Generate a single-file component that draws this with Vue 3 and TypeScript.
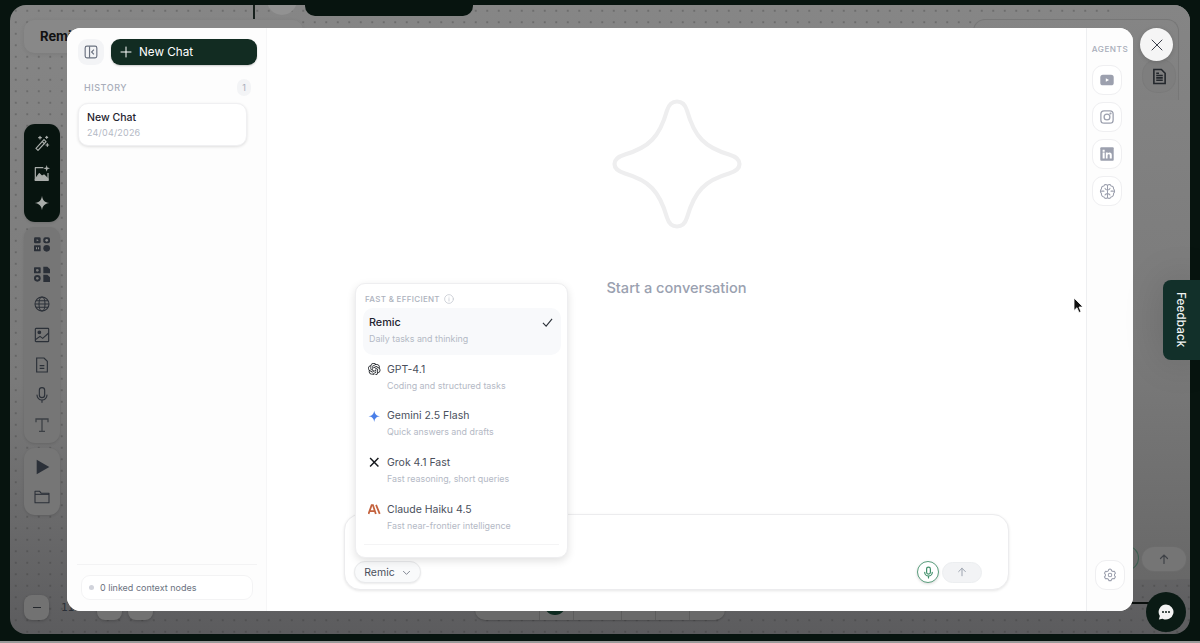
<script setup lang="ts">
interface Model {
  name: string
  desc: string
  icon?: 'gpt' | 'gemini' | 'grok' | 'claude'
  active?: boolean
}

const models: Model[] = [
  { name: 'Remic', desc: 'Daily tasks and thinking', active: true },
  { name: 'GPT-4.1', desc: 'Coding and structured tasks', icon: 'gpt' },
  { name: 'Gemini 2.5 Flash', desc: 'Quick answers and drafts', icon: 'gemini' },
  { name: 'Grok 4.1 Fast', desc: 'Fast reasoning, short queries', icon: 'grok' },
  { name: 'Claude Haiku 4.5', desc: 'Fast near-frontier intelligence', icon: 'claude' },
]

const openaiPath =
  'M22.2819 9.8211a5.9847 5.9847 0 0 0-.5157-4.9108 6.0462 6.0462 0 0 0-6.5098-2.9A6.0651 6.0651 0 0 0 4.9807 4.1818a5.9847 5.9847 0 0 0-3.9977 2.9 6.0462 6.0462 0 0 0 .7427 7.0966 5.98 5.98 0 0 0 .511 4.9107 6.051 6.051 0 0 0 6.5146 2.9001A5.9847 5.9847 0 0 0 13.2599 24a6.0557 6.0557 0 0 0 5.7718-4.2058 5.9894 5.9894 0 0 0 3.9977-2.9001 6.0557 6.0557 0 0 0-.7475-7.0729zm-9.022 12.6081a4.4755 4.4755 0 0 1-2.8764-1.0408l.1419-.0804 4.7783-2.7582a.7948.7948 0 0 0 .3927-.6813v-6.7369l2.02 1.1686a.071.071 0 0 1 .038.052v5.5826a4.504 4.504 0 0 1-4.4945 4.4944zm-9.6607-4.1254a4.4708 4.4708 0 0 1-.5346-3.0137l.142.0852 4.783 2.7582a.7712.7712 0 0 0 .7806 0l5.8428-3.3685v2.3324a.0804.0804 0 0 1-.0332.0615L9.74 19.9502a4.4992 4.4992 0 0 1-6.1408-1.6464zM2.3408 7.8956a4.485 4.485 0 0 1 2.3655-1.9728V11.6a.7664.7664 0 0 0 .3879.6765l5.8144 3.3543-2.0201 1.1685a.0757.0757 0 0 1-.071 0l-4.8303-2.7865A4.504 4.504 0 0 1 2.3408 7.872zm16.5963 3.8558L13.1038 8.364 15.1192 7.2a.0757.0757 0 0 1 .071 0l4.8303 2.7913a4.4944 4.4944 0 0 1-.6765 8.1042v-5.6772a.79.79 0 0 0-.407-.667zm2.0107-3.0231l-.142-.0852-4.7735-2.7818a.7759.7759 0 0 0-.7854 0L9.409 9.2297V6.8974a.0662.0662 0 0 1 .0284-.0615l4.8303-2.7866a4.4992 4.4992 0 0 1 6.6802 4.66zM8.3065 12.863l-2.02-1.1638a.0804.0804 0 0 1-.038-.0567V6.0742a4.4992 4.4992 0 0 1 7.3757-3.4537l-.142.0805L8.704 5.459a.7948.7948 0 0 0-.3927.6813zm1.0976-2.3654l2.602-1.4998 2.6069 1.4998v2.9994l-2.5974 1.4997-2.6067-1.4997Z'
</script>

<template>
  <div class="page">
    <!-- dimmed canvas behind the modal -->
    <div class="canvas">
      <div class="brand">Remic</div>
      <div class="top-line"></div>
      <div class="top-circle"></div>
      <div class="top-pill"></div>
      <div class="right-block"></div>
      <div class="top-right-panel"></div>
      <div class="doc-btn">
        <svg width="15" height="17" viewBox="0 0 16 18" fill="none" stroke="#23272c" stroke-width="1.7">
          <path d="M2 1.5h8l4 4v11H2z" />
          <path d="M4.5 8h7M4.5 10.500h7M4.5 13h7M4.5 5.500h3" />
        </svg>
      </div>

      <div class="rail">
        <div class="rail-group dark">
          <svg class="ri" viewBox="0 0 24 24" fill="none" stroke="#a9adaa" stroke-width="1.800" stroke-linecap="round">
            <path d="M3 20 15 7l3 3L6 23z" />
            <path d="M12.500 10l3 3M9 2v4M7 4h4M20 13v4M18 15h4M19 2v3M17.500 3.500h3" />
          </svg>
          <svg class="ri" viewBox="0 0 24 24" fill="none" stroke="#a9adaa" stroke-width="1.800" stroke-linejoin="round">
            <path d="M14 4H2v19h19V12" />
            <path d="M2 21l6-8 4 4 3-2 6 6v2H2z" fill="#a9adaa" />
            <path d="M19 0l1.200 3.800L24 5l-3.800 1.200L19 10l-1.200-3.800L14 5l3.800-1.200z" fill="#a9adaa" stroke="none" />
          </svg>
          <svg class="ri" viewBox="0 0 24 24" fill="#a9adaa">
            <path d="M12 1c1 7 4 10 11 11-7 1-10 4-11 11-1-7-4-10-11-11 7-1 10-4 11-11z" />
          </svg>
        </div>
        <div class="rail-group">
          <svg class="ri" viewBox="0 0 24 24" fill="#2b3038">
            <rect x="0" y="2" width="10" height="9" rx="2" />
            <rect x="14" y="2" width="10" height="9" rx="3" />
            <rect x="0" y="14" width="10" height="9" rx="1" />
            <circle cx="19" cy="18.500" r="5" />
            <path d="M4 5l3 1.500L4 8z" fill="#888" />
            <circle cx="19" cy="6.500" r="2" fill="#888" />
            <path d="M3 17v3h1.500v-3zM6 17v3h1.500v-3z" fill="#888" />
          </svg>
          <svg class="ri" viewBox="0 0 24 24" fill="#2b3038">
            <rect x="0" y="2" width="10" height="9" rx="1" />
            <path d="M14 1h6l4 4v6H14z" />
            <circle cx="5" cy="18.500" r="5" />
            <path d="M14 13h6l4 4v7H14z" />
            <circle cx="5" cy="6.500" r="2" fill="#777" />
            <circle cx="5" cy="18.500" r="2" fill="#777" />
          </svg>
          <svg class="ri" viewBox="0 0 24 24" fill="none" stroke="#2b3038" stroke-width="1.600">
            <circle cx="12" cy="12" r="10.500" />
            <ellipse cx="12" cy="12" rx="4.500" ry="10.500" />
            <path d="M1.500 12h21M3 7h18M3 17h18" />
          </svg>
          <svg class="ri" viewBox="0 0 24 24" fill="none" stroke="#2b3038" stroke-width="1.700">
            <rect x="2" y="2" width="20" height="20" rx="1" />
            <circle cx="8" cy="8" r="2" fill="#2b3038" />
            <path d="M2 19l7-5 4 3 9-8" />
          </svg>
          <svg class="ri" viewBox="0 0 24 24" fill="none" stroke="#2b3038" stroke-width="1.700">
            <path d="M4 1.500h11l5 5V22.500H4z" />
            <path d="M8.500 13h7M8.500 17h7" />
          </svg>
          <svg class="ri" viewBox="0 0 24 24" fill="none" stroke="#2b3038" stroke-width="1.700" stroke-linecap="round">
            <rect x="8" y="1" width="8" height="15" rx="4" />
            <path d="M4.500 12a7.500 7.500 0 0 0 15 0M12 19.500V23" />
          </svg>
          <svg class="ri" viewBox="0 0 24 24" fill="none" stroke="#3c4045" stroke-width="1.900">
            <path d="M3 8V3h18v5M12 3v18M7.500 21.500h9" />
          </svg>
        </div>
        <div class="rail-group short">
          <svg class="ri" viewBox="0 0 24 24" fill="#2b3038"><path d="M4 1l19 11L4 23z" /></svg>
          <svg class="ri" viewBox="0 0 24 24" fill="none" stroke="#2b3038" stroke-width="1.600" stroke-linejoin="round">
            <path d="M1.500 3.500h7l2.500 3h11.500v14h-21z" />
            <path d="M1.500 8h21" />
          </svg>
        </div>
      </div>

      <div class="zoom-btn minus"><span></span></div>
      <div class="zoom-label">11</div>
      <div class="zoom-btn b2"></div>
      <div class="zoom-btn b3"></div>

      <div class="bottom-bar">
        <i style="left: 64px"></i>
        <i style="left: 98px"></i>
        <i style="left: 146px"></i>
        <i style="left: 180px"></i>
        <i style="left: 214px"></i>
        <b></b>
      </div>

      <div class="right-back">
        <div class="back-arc"></div>
        <div class="back-send">
          <svg width="12" height="12" viewBox="0 0 24 24" fill="none" stroke="#3f4247" stroke-width="2.400" stroke-linecap="round">
            <path d="M12 21V4M5 11l7-7 7 7" />
          </svg>
        </div>
      </div>
      <div class="dark-line"></div>
    </div>

    <!-- modal -->
    <div class="modal">
      <aside class="sidebar">
        <div class="side-top">
          <button class="toggle">
            <svg width="14" height="14" viewBox="0 0 24 24" fill="none" stroke="#6b7280" stroke-width="2">
              <rect x="2" y="2" width="20" height="20" rx="3" />
              <path d="M9.500 2v20M17 8l-4 4 4 4" />
            </svg>
          </button>
          <button class="new-chat">
            <svg width="12" height="12" viewBox="0 0 24 24" fill="none" stroke="#fff" stroke-width="2" stroke-linecap="round">
              <path d="M12 2v20M2 12h20" />
            </svg>
            New Chat
          </button>
        </div>
        <div class="history-head">
          <span>HISTORY</span>
          <em>1</em>
        </div>
        <div class="chat-card">
          <div class="chat-title">New Chat</div>
          <div class="chat-date">24/04/2026</div>
        </div>
        <div class="side-foot">
          <div class="linked"><span class="dot"></span>0 linked context nodes</div>
        </div>
      </aside>

      <main class="main">
        <div class="hero">
          <svg width="130" height="130" viewBox="0 0 130 130" fill="none" stroke="#eeeeef" stroke-width="4.200">
            <path d="M65 2.500c6 0 8.500 4 10 9 7.500 26.500 18 37 42 44 6 1.800 10.500 4.500 10.500 9.500s-4.500 7.700-10.500 9.500c-24 7-34.500 17.500-42 44-1.500 5-4 9-10 9s-8.500-4-10-9c-7.500-26.500-18-37-42-44C7 72.700 2.500 70 2.500 65s4.500-7.700 10.500-9.500c24-7 34.500-17.500 42-44 1.500-5 4-9 10-9z" />
          </svg>
          <p>Start a conversation</p>
        </div>

        <div class="composer">
          <div class="chip-wrap">
            <div class="menu">
              <div class="menu-head">
                FAST &amp; EFFICIENT
                <svg width="10" height="10" viewBox="0 0 24 24" fill="none" stroke="#c3c7cf" stroke-width="1.800" stroke-linecap="round">
                  <circle cx="12" cy="12" r="10.500" />
                  <path d="M12 11v6M12 7.500v.1" />
                </svg>
              </div>
              <div v-for="m in models" :key="m.name" class="model" :class="{ active: m.active }">
                <div class="model-name">
                  <svg v-if="m.icon === 'gpt'" class="logo" viewBox="0 0 24 24" fill="#1f2328"><path :d="openaiPath" /></svg>
                  <svg v-else-if="m.icon === 'gemini'" class="logo" viewBox="0 0 24 24" fill="#4a7fe8">
                    <path d="M12 1c1 7 4 10 11 11-7 1-10 4-11 11-1-7-4-10-11-11 7-1 10-4 11-11z" />
                  </svg>
                  <svg v-else-if="m.icon === 'grok'" class="logo" viewBox="0 0 24 24" fill="none" stroke="#15181c" stroke-width="2.800">
                    <path d="M4 4l16 16M20 4L4 20" />
                  </svg>
                  <svg v-else-if="m.icon === 'claude'" class="logo" viewBox="0 0 24 24" fill="none" stroke="#c4623d" stroke-width="3.400">
                    <path d="M1 21 7 4h2.500L15 21M4 15.500h8M15.500 3.500 22.500 21" />
                  </svg>
                  <span>{{ m.name }}</span>
                  <svg v-if="m.active" class="check" width="11" height="11" viewBox="0 0 24 24" fill="none" stroke="#2b3038" stroke-width="2.400">
                    <path d="M2 13l7 7L22 4" />
                  </svg>
                </div>
                <div class="model-desc">{{ m.desc }}</div>
              </div>
              <div class="menu-rule"></div>
            </div>
          </div>
          <div class="composer-row">
            <button class="chip">
              Remic
              <svg width="9" height="9" viewBox="0 0 24 24" fill="none" stroke="#6b7280" stroke-width="2.200">
                <path d="M3 8l9 9 9-9" />
              </svg>
            </button>
            <div class="composer-actions">
              <button class="mic">
                <svg width="13" height="13" viewBox="0 0 24 24" fill="none" stroke="#3f8f69" stroke-width="2.200" stroke-linecap="round">
                  <rect x="8.500" y="2" width="7" height="13" rx="3.500" />
                  <path d="M5 11.500a7 7 0 0 0 14 0M12 18.500V22" />
                </svg>
              </button>
              <button class="send">
                <svg width="10" height="10" viewBox="0 0 24 24" fill="none" stroke="#9ca3af" stroke-width="2.400" stroke-linecap="round">
                  <path d="M12 21V3M4 11l8-8 8 8" />
                </svg>
              </button>
            </div>
          </div>
        </div>
      </main>

      <aside class="agents">
        <div class="agents-label">AGENTS</div>
        <button class="agent">
          <svg viewBox="0 0 24 24"><rect x="0.500" y="3" width="23" height="18" rx="4.500" fill="#9ca0ae" /><path d="M10 9l5.500 3-5.500 3z" fill="#fff" /></svg>
        </button>
        <button class="agent">
          <svg viewBox="0 0 24 24" fill="none" stroke="#9ca0ae" stroke-width="2.200"><rect x="1.500" y="1.500" width="21" height="21" rx="5.500" /><circle cx="12" cy="12" r="5" /><circle cx="18" cy="6" r=".8" fill="#9ca0ae" /></svg>
        </button>
        <button class="agent">
          <svg viewBox="0 0 24 24"><rect x="0.500" y="0.500" width="23" height="23" rx="1.500" fill="#9ca0ae" /><path d="M4.500 9.500h3.500v10H4.500zM4.500 4.500h3.500v3.500H4.500zM10 9.500h3.300v1.400c.7-1 1.700-1.600 3.100-1.600 2.600 0 3.800 1.500 3.800 4.400v5.800h-3.500v-5.200c0-1.300-.5-2-1.600-2-1.200 0-2.100.8-2.100 2.100v5.100H10z" fill="#fff" /></svg>
        </button>
        <button class="agent brain">
          <svg viewBox="0 0 24 24" fill="none" stroke="#9ca0ae" stroke-width="1.500" stroke-linecap="round" stroke-linejoin="round">
            <path d="M12 3.500C10 1.500 7.500 2 7 4.200 4.500 4.200 3 6.200 3.500 8.300 1.500 9.800 1.500 13.200 3.500 14.700 3 17.200 4.500 19.500 7 19.700 7.500 21.700 10 22.500 12 20.700" />
            <path d="M12 3.500C14 1.500 16.500 2 17 4.200 19.500 4.200 21 6.200 20.500 8.300 22.500 9.800 22.500 13.200 20.500 14.700 21 17.200 19.500 19.500 17 19.700 16.500 21.700 14 22.500 12 20.700" />
            <path d="M12 3.500v17.200M12 10c-1.500 0-3-.8-3.500-2.500M12 10c1.500 0 3-.8 3.500-2.500M12 15c-1.500 0-3 .8-3.500 2M12 15c1.500 0 3 .8 3.500 2M3.500 11.500H7M20.500 11.500H17" />
          </svg>
        </button>
        <button class="agent settings">
          <svg viewBox="0 0 24 24" fill="none" stroke="#9ca0ae" stroke-width="1.800" stroke-linejoin="round">
            <path d="M12 1.800l2 .6.700 2.400 2.300 1.300 2.400-.6 2 3.400-1.700 1.800v2.600l1.700 1.800-2 3.400-2.400-.6-2.300 1.300-.7 2.400h-4l-.7-2.400L6.800 18l-2.400.6-2-3.400 1.700-1.800v-2.600L2.400 9l2-3.400 2.400.6 2.300-1.300.7-2.400z" />
            <circle cx="12" cy="12" r="3" />
          </svg>
        </button>
      </aside>
    </div>

    <button class="close">
      <svg width="12" height="12" viewBox="0 0 24 24" fill="none" stroke="#3a3f4a" stroke-width="2" stroke-linecap="round">
        <path d="M2 2l20 20M22 2L2 22" />
      </svg>
    </button>

    <div class="feedback"><span>Feedback</span></div>

    <button class="chat-fab">
      <svg width="18" height="18" viewBox="0 0 24 24">
        <path d="M12 2a10 10 0 1 1-4.600 18.900L2.500 22l1.300-4.600A10 10 0 0 1 12 2z" fill="#f3f3f3" />
        <circle cx="8" cy="12" r="1.300" fill="#0a1a14" />
        <circle cx="12" cy="12" r="1.300" fill="#0a1a14" />
        <circle cx="16" cy="12" r="1.300" fill="#0a1a14" />
      </svg>
    </button>

    <svg class="cursor" width="11" height="17" viewBox="0 0 11 17">
      <path d="M1 1v12.500l3-2.800 2 4.800 2-.8-2-4.700h4z" fill="#111" stroke="#fff" stroke-width=".8" />
    </svg>
  </div>
</template>

<style>
html,
body {
  margin: 0;
  overflow: hidden;
}
</style>

<style scoped>
.page {
  position: relative;
  width: 1200px;
  height: 643px;
  overflow: hidden;
  background: linear-gradient(#07140f 0 641px, #9a9a9a 641px);
  font-family: Inter, 'Liberation Sans', sans-serif;
}

button {
  font-family: inherit;
  padding: 0;
  border: none;
  cursor: pointer;
}

/* canvas behind */
.canvas {
  position: absolute;
  left: 10px;
  top: 5px;
  width: 1180px;
  height: 629px;
  border-radius: 16px;
  overflow: hidden;
  background-color: #7c7c7c;
  background-image:
    radial-gradient(circle, rgba(50, 50, 50, 0.4) 0.6px, transparent 0.9px),
    linear-gradient(#868686, #7a7a7a 60%, #5c5c5e);
  background-size: 11.500px 11.500px, 100% 100%;
}

.brand {
  position: absolute;
  left: 14px;
  top: 15px;
  width: 279px;
  height: 33px;
  padding-left: 16px;
  box-sizing: border-box;
  line-height: 33px;
  border-radius: 10px;
  background: #888;
  box-shadow: 0 1px 4px rgba(0, 0, 0, 0.08);
  color: #111;
  font-size: 13px;
  font-weight: 700;
}

.top-line {
  position: absolute;
  left: 243px;
  top: 0;
  width: 2px;
  height: 14px;
  background: #16201c;
}

.top-circle {
  position: absolute;
  left: 257px;
  top: -20px;
  width: 30px;
  height: 30px;
  border-radius: 50%;
  background: #929292;
}

.top-pill {
  position: absolute;
  left: 295px;
  top: -20px;
  width: 168px;
  height: 31px;
  border-radius: 10px;
  background: #07140f;
}

/* plain area right of the modal, the dot grid does not show here */
.right-block {
  position: absolute;
  left: 1100px;
  top: 0;
  width: 80px;
  height: 574px;
  background: linear-gradient(#858585, #7a7a7a 60%, #686868);
}

.top-right-panel {
  position: absolute;
  left: 963px;
  top: 14px;
  width: 204px;
  height: 80px;
  border: 1px solid #777;
  border-bottom: none;
  border-radius: 12px 12px 0 0;
  background: linear-gradient(#858585, #808080);
}

.doc-btn {
  position: absolute;
  left: 1133px;
  top: 55px;
  width: 32px;
  height: 32px;
  display: flex;
  align-items: center;
  justify-content: center;
  border-radius: 14px;
  background: #7e7e7e;
  box-shadow: 0 0 0 1px rgba(0, 0, 0, 0.05);
}

.rail {
  position: absolute;
  left: 14px;
  top: 119px;
  width: 36px;
  display: flex;
  flex-direction: column;
  gap: 5px;
}

.rail-group {
  display: flex;
  flex-direction: column;
  align-items: center;
  gap: 14.200px;
  padding: 9px 0 9.800px;
  border-radius: 11px;
  background: #767676;
  box-shadow: 0 1px 3px rgba(0, 0, 0, 0.12);
}

.rail-group.dark {
  background: #07140f;
  padding: 11px 0;
  gap: 14px;
}

.rail-group.short {
  padding: 11px 0 10px;
  gap: 14px;
}

.ri {
  width: 16px;
  height: 16px;
  flex: none;
}

.zoom-btn {
  position: absolute;
  top: 590px;
  width: 25px;
  height: 25px;
  border-radius: 8px;
  background: #727272;
  box-shadow: 0 1px 3px rgba(0, 0, 0, 0.2);
}

.minus {
  left: 14px;
  display: flex;
  align-items: center;
  justify-content: center;
}

.minus span {
  width: 8px;
  height: 1.500px;
  background: #23272c;
}

.b2 {
  left: 87px;
}

.b3 {
  left: 118px;
}

.zoom-label {
  position: absolute;
  left: 51px;
  top: 596px;
  font-family: 'DejaVu Sans Mono', monospace;
  font-size: 11px;
  color: #2b3038;
}

.bottom-bar {
  position: absolute;
  left: 465px;
  top: 590px;
  width: 250px;
  height: 25px;
  border-radius: 10px;
  background: #6a6a6a;
  box-shadow: 0 1px 2px rgba(0, 0, 0, 0.2);
}

.bottom-bar i {
  position: absolute;
  top: 0;
  width: 1px;
  height: 25px;
  background: #5c5c5c;
}

.bottom-bar b {
  position: absolute;
  left: 69px;
  top: 8px;
  width: 22px;
  height: 12px;
  border-radius: 0 0 11px 11px;
  background: #0e2a20;
}

.right-back {
  position: absolute;
  left: 1100px;
  top: 488px;
  width: 67px;
  height: 86px;
  border-bottom: 1px solid #666;
}

.back-arc {
  position: absolute;
  left: 7px;
  top: 53px;
  width: 20px;
  height: 22px;
  border: 1px solid #3d5e50;
  border-radius: 50%;
}

.back-send {
  position: absolute;
  left: 32px;
  top: 54px;
  width: 44px;
  height: 24px;
  display: flex;
  align-items: center;
  justify-content: center;
  border-radius: 12px;
  background: #757575;
  box-shadow: 0 0 0 1px #6c6c6c;
}

.dark-line {
  position: absolute;
  left: 1120px;
  top: 597px;
  width: 30px;
  height: 2px;
  background: #0a0f0d;
}

/* modal */
.modal {
  position: absolute;
  left: 67px;
  top: 28px;
  width: 1066px;
  height: 583px;
  display: flex;
  overflow: hidden;
  border-radius: 14px;
  background: #fff;
}

.sidebar {
  width: 200px;
  flex: none;
  display: flex;
  flex-direction: column;
  box-sizing: border-box;
  padding: 11px 9px 0 11px;
  background: #fdfdfd;
  border-right: 1px solid #f6f6f7;
}

.side-top {
  display: flex;
  gap: 7px;
}

.toggle {
  width: 26px;
  height: 26px;
  flex: none;
  display: flex;
  align-items: center;
  justify-content: center;
  border-radius: 9px;
  background: #f3f4f6;
}

.new-chat {
  flex: 1;
  height: 26px;
  display: flex;
  align-items: center;
  gap: 7px;
  padding-left: 9px;
  border-radius: 9px;
  background: #122c22;
  color: #fff;
  font-size: 11.700px;
  font-weight: 400;
  box-shadow: 0 1px 2px rgba(0, 0, 0, 0.2);
}

.history-head {
  display: flex;
  align-items: center;
  justify-content: space-between;
  margin: 14px 6px 7px 6px;
  height: 17px;
}

.history-head span {
  font-size: 9px;
  font-weight: 500;
  letter-spacing: 0.55px;
  color: #a8adba;
}

.history-head em {
  width: 14px;
  height: 17px;
  line-height: 17px;
  border-radius: 7px;
  background: #f3f4f6;
  text-align: center;
  font-size: 9px;
  font-style: normal;
  color: #a8adba;
}

.chat-card {
  width: 169px;
  height: 43px;
  box-sizing: border-box;
  padding: 7px 8px;
  border-radius: 10px;
  background: #fff;
  border: 1px solid #f0f0f2;
  box-shadow: 0 1px 3px rgba(0, 0, 0, 0.12);
}

.chat-title {
  font-size: 10.500px;
  font-weight: 500;
  line-height: 14px;
  color: #1f2430;
}

.chat-date {
  margin-top: 1px;
  font-size: 9px;
  line-height: 13px;
  letter-spacing: 0.2px;
  color: #b4b9c5;
}

.side-foot {
  margin-top: auto;
  border-top: 1px solid #f3f3f4;
  padding: 10px 4px 11px 4px;
  margin-left: -1px;
}

.linked {
  height: 25px;
  display: flex;
  align-items: center;
  box-sizing: border-box;
  padding-left: 7px;
  gap: 6px;
  border: 1px solid #f3f3f4;
  border-radius: 9px;
  background: #fff;
  font-size: 9px;
  color: #6b7280;
}

.dot {
  width: 5px;
  height: 5px;
  border-radius: 50%;
  background: #d1d3db;
}

.main {
  flex: 1;
  display: flex;
  flex-direction: column;
  align-items: center;
  padding-bottom: 21px;
}

.hero {
  flex: 1;
  display: flex;
  flex-direction: column;
  align-items: center;
  padding-top: 71px;
}

.hero p {
  margin: 50px 0 0;
  font-size: 14.600px;
  font-weight: 500;
  line-height: 19px;
  color: #9aa1b0;
}

.composer {
  width: 665px;
  height: 76px;
  box-sizing: border-box;
  position: relative;
  padding: 46px 26px 0 9px;
  border: 1px solid #ececee;
  border-radius: 16px;
  background: #fff;
  box-shadow: 0 1px 3px rgba(0, 0, 0, 0.1);
}

.chip-wrap {
  position: absolute;
  left: 10px;
  bottom: 31px;
}

.menu {
  width: 213px;
  height: 275px;
  box-sizing: border-box;
  padding: 8px 6px 0 7px;
  border: 1px solid #eeeef0;
  border-radius: 10px;
  background: #fff;
  box-shadow: 0 3px 8px rgba(0, 0, 0, 0.12);
}

.menu-head {
  display: flex;
  align-items: center;
  gap: 4px;
  height: 14px;
  margin: 0 0 2px 2px;
  font-size: 8px;
  font-weight: 500;
  letter-spacing: 0.3px;
  color: #adb2bd;
}

.model {
  height: 46.700px;
  box-sizing: border-box;
  padding: 7px 7px 0 5px;
  border-radius: 10px;
}

.model.active {
  background: #f8f9fb;
  padding-left: 6px;
  padding-right: 8px;
}

.model-name {
  display: flex;
  align-items: center;
  height: 15px;
  font-size: 10.500px;
  color: #4a4f5c;
}

.active .model-name {
  font-size: 10.800px;
  font-weight: 500;
  color: #1f2430;
}

.logo {
  width: 12.500px;
  height: 12.500px;
  flex: none;
  margin-right: 6.500px;
}

.check {
  margin-left: auto;
}

.model-desc {
  margin-top: 2px;
  padding-left: 19px;
  font-size: 8.900px;
  line-height: 14px;
  color: #b4b9c5;
}

.active .model-desc {
  padding-left: 0;
}

.menu-rule {
  height: 1px;
  margin: 3px 2px 0 1px;
  background: #f4f4f5;
}

.composer-row {
  display: flex;
  align-items: center;
  justify-content: space-between;
}

.chip {
  width: 67px;
  height: 22px;
  display: flex;
  align-items: center;
  justify-content: center;
  gap: 7px;
  border: 1px solid #e9eaec;
  border-radius: 11px;
  background: #f9fafb;
  box-shadow: 0 1px 2px rgba(0, 0, 0, 0.08);
  font-size: 10.500px;
  color: #4a4f5c;
}

.composer-actions {
  display: flex;
  align-items: center;
  gap: 3px;
}

.mic {
  width: 22px;
  height: 22px;
  display: flex;
  align-items: center;
  justify-content: center;
  border: 1px solid #5a9e7d;
  border-radius: 50%;
  background: #fff;
  box-shadow: 0 1px 3px rgba(0, 0, 0, 0.15);
}

.send {
  width: 40px;
  height: 21px;
  display: flex;
  align-items: center;
  justify-content: center;
  border: 1px solid #eceef0;
  border-radius: 11px;
  background: #f2f3f5;
}

.agents {
  width: 47px;
  flex: none;
  display: flex;
  flex-direction: column;
  align-items: center;
  box-sizing: border-box;
  padding-top: 15px;
  gap: 7px;
  background: #fdfdfd;
  border-left: 1px solid #eeeff1;
}

.agents-label {
  height: 15px;
  margin-top: 1px;
  margin-bottom: -1px;
  font-size: 8.200px;
  line-height: 11px;
  font-weight: 500;
  letter-spacing: 0.5px;
  color: #a8adba;
}

.agent {
  width: 30px;
  height: 30px;
  flex: none;
  align-self: flex-start;
  margin-left: 5px;
  display: flex;
  align-items: center;
  justify-content: center;
  border: 1px solid #efeff1;
  border-radius: 11px;
  background: #fff;
}

.agent svg {
  width: 14px;
  height: 14px;
}

.agent.brain svg {
  width: 17px;
  height: 17px;
}

.settings {
  align-self: center;
  margin-left: 0;
  margin-top: auto;
  margin-bottom: 21px;
}

.close {
  position: absolute;
  left: 1140px;
  top: 28px;
  width: 33px;
  height: 33px;
  display: flex;
  align-items: center;
  justify-content: center;
  border-radius: 50%;
  background: #f5f5f5;
  box-shadow: 0 1px 4px rgba(0, 0, 0, 0.15);
}

.feedback {
  position: absolute;
  left: 1163px;
  top: 280px;
  width: 37px;
  height: 80px;
  display: flex;
  align-items: center;
  justify-content: center;
  padding-right: 2px;
  box-sizing: border-box;
  border-radius: 8px 0 0 8px;
  background: #12302a;
  box-shadow: 0 0 40px rgba(0, 0, 0, 0.14);
}

.feedback span {
  writing-mode: vertical-rl;
  font-size: 11.500px;
  font-weight: 500;
  letter-spacing: 0.2px;
  color: #f3f5f4;
}

.chat-fab {
  position: absolute;
  left: 1146px;
  top: 592px;
  width: 40px;
  height: 40px;
  display: flex;
  align-items: center;
  justify-content: center;
  border-radius: 50%;
  background: #0a1a14;
}

.cursor {
  position: absolute;
  left: 1073px;
  top: 297px;
}
</style>
